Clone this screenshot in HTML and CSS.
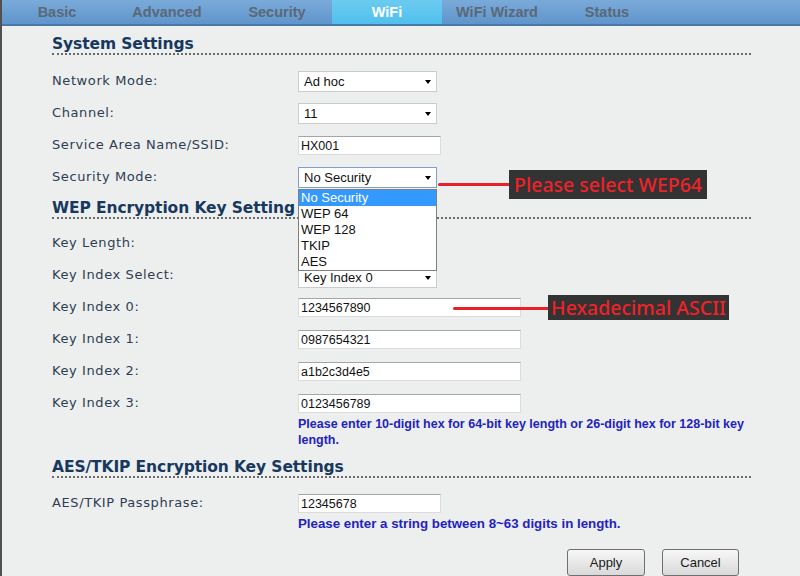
FILE: index.html
```html
<!DOCTYPE html>
<html>
<head>
<meta charset="utf-8">
<title>WiFi</title>
<link rel="stylesheet" href="styles.css">
</head>
<body>
<div class="page">
  <nav class="tabs">
    <div class="tab">Basic</div>
    <div class="tab">Advanced</div>
    <div class="tab">Security</div>
    <div class="tab active">WiFi</div>
    <div class="tab">WiFi Wizard</div>
    <div class="tab">Status</div>
  </nav>
  <main class="content">
    <h2 class="section-title first">System Settings</h2>
    <div class="rows">
      <div class="row">
        <div class="label">Network Mode:</div>
        <div class="field"><div class="select">Ad hoc<span class="arrow"></span></div></div>
      </div>
      <div class="row">
        <div class="label">Channel:</div>
        <div class="field"><div class="select">11<span class="arrow"></span></div></div>
      </div>
      <div class="row">
        <div class="label">Service Area Name/SSID:</div>
        <div class="field"><input class="text short" type="text" value="HX001"></div>
      </div>
      <div class="row">
        <div class="label">Security Mode:</div>
        <div class="field">
          <div class="anchor">
            <div class="select focus">No Security<span class="arrow"></span></div>
            <ul class="dropdown">
              <li class="sel">No Security</li>
              <li>WEP 64</li>
              <li>WEP 128</li>
              <li>TKIP</li>
              <li>AES</li>
            </ul>
            <span class="callout-line line-1"></span>
            <span class="callout box-1">Please select WEP64</span>
          </div>
        </div>
      </div>
    </div>

    <h2 class="section-title wep">WEP Encryption Key Setting</h2>
    <div class="rows wep-rows">
      <div class="row">
        <div class="label">Key Length:</div>
        <div class="field"><div class="select"><span class="arrow"></span></div></div>
      </div>
      <div class="row">
        <div class="label">Key Index Select:</div>
        <div class="field"><div class="select select-low">Key Index 0<span class="arrow"></span></div></div>
      </div>
      <div class="row">
        <div class="label">Key Index 0:</div>
        <div class="field">
          <div class="anchor">
            <input class="text long" type="text" value="1234567890">
            <span class="callout-line line-2"></span>
            <span class="callout box-2">Hexadecimal ASCII</span>
          </div>
        </div>
      </div>
      <div class="row">
        <div class="label">Key Index 1:</div>
        <div class="field"><input class="text long" type="text" value="0987654321"></div>
      </div>
      <div class="row">
        <div class="label">Key Index 2:</div>
        <div class="field"><input class="text long" type="text" value="a1b2c3d4e5"></div>
      </div>
      <div class="row hint-row">
        <div class="label">Key Index 3:</div>
        <div class="field">
          <input class="text long" type="text" value="0123456789">
          <p class="hint">Please enter 10-digit hex for 64-bit key length or 26-digit hex for 128-bit key length.</p>
        </div>
      </div>
    </div>

    <h2 class="section-title aes">AES/TKIP Encryption Key Settings</h2>
    <div class="rows aes-rows">
      <div class="row hint-row">
        <div class="label">AES/TKIP Passphrase:</div>
        <div class="field">
          <input class="text short" type="text" value="12345678">
          <p class="hint hint-lg">Please enter a string between 8~63 digits in length.</p>
        </div>
      </div>
    </div>

    <div class="actions">
      <button class="btn" type="button">Apply</button>
      <button class="btn" type="button">Cancel</button>
    </div>
  </main>
</div>
</body>
</html>
```

FILE: styles.css
```css
html, body {
  margin: 0;
  padding: 0;
  height: 576px;
  overflow: hidden;
}

body {
  background: #edeeee;
  font-family: "Liberation Sans", Arial, sans-serif;
}

.page {
  height: 576px;
  border-left: 2px solid #505050;
  box-sizing: border-box;
  background: #edeeee;
}

/* ---------- tabs ---------- */
.tabs {
  display: flex;
  height: 24px;
  background: linear-gradient(#7aaad9, #5f95cc);
  border-bottom: 2px solid #4a78a8;
}

.tab {
  width: 110px;
  line-height: 24px;
  text-align: center;
  font-weight: bold;
  font-size: 14.5px;
  color: #5b6876;
}

.tab.active {
  background: linear-gradient(#6ccbf0, #50c0ee);
  color: #ffffff;
}

/* ---------- content ---------- */
.content {
  padding: 0 49px 0 50px;
}

.section-title {
  margin: 0;
  font-family: "DejaVu Sans", Verdana, sans-serif;
  font-weight: bold;
  font-size: 15.5px;
  line-height: 18px;
  color: #17385f;
  border-bottom: 2px dotted #6a6a6a;
  letter-spacing: -0.1px;
}

.section-title.first { margin-top: 9px; }
.section-title.wep { margin-top: 6px; }
.section-title.aes { margin-top: 5px; }

.rows { margin-top: 10px; }
.wep-rows { margin-top: 8px; }
.aes-rows { margin-top: 9px; }

.row {
  display: grid;
  grid-template-columns: 246px 1fr;
  padding: 6px 0;
  height: 20px;
}

.row.hint-row {
  height: auto;
  padding-bottom: 5px;
}

.label {
  font-family: "DejaVu Sans", Verdana, sans-serif;
  font-size: 13px;
  letter-spacing: 0.6px;
  line-height: 20px;
  color: #2e3d52;
}

.field {
  position: relative;
}

.anchor {
  position: relative;
}

/* ---------- select-like boxes ---------- */
.select {
  position: relative;
  width: 139px;
  height: 21px;
  box-sizing: border-box;
  border: 1px solid #cbcbcb;
  background: #ffffff;
  font-size: 13px;
  line-height: 19px;
  padding-left: 5px;
  color: #111111;
}

.select.select-low {
  margin-top: 2px;
}

.select.focus {
  border-color: #7d9fc8;
}

.arrow {
  position: absolute;
  right: 5px;
  top: 8px;
  width: 0;
  height: 0;
  border-top: 4px solid #000000;
  border-left: 3.5px solid transparent;
  border-right: 3.5px solid transparent;
}

.dropdown {
  position: absolute;
  left: 0;
  top: 22px;
  width: 139px;
  box-sizing: border-box;
  margin: 0;
  padding: 0;
  list-style: none;
  border: 1px solid #7f7f7f;
  background: #ffffff;
  z-index: 5;
}

.dropdown li {
  height: 16px;
  line-height: 16px;
  font-size: 13px;
  padding-left: 2px;
  color: #111111;
}

.dropdown li.sel {
  background: #3399ff;
  color: #ffffff;
}

/* ---------- text inputs ---------- */
.text {
  display: block;
  margin: 1px 0 0 0;
  height: 19px;
  box-sizing: border-box;
  border: 1px solid #dcdcdc;
  border-top-color: #a5a5a5;
  background: #ffffff;
  padding: 0 2px;
  font-family: "Liberation Sans", Arial, sans-serif;
  font-size: 12.5px;
  color: #111111;
  outline: none;
}

.text.short { width: 143px; }
.text.long { width: 223px; }

.hint {
  margin: 3px 0 0 0;
  font-size: 12.5px;
  font-weight: bold;
  line-height: 16px;
  color: #2323bd;
  max-width: 455px;
}

.hint.hint-lg {
  font-size: 13.3px;
}

/* ---------- callouts ---------- */
.callout-line {
  position: absolute;
  height: 3px;
  background: #e8202a;
  border-radius: 2px;
  z-index: 6;
}

.line-1 { left: 140px; top: 16px; width: 72px; }
.line-2 { left: 155px; top: 9px; width: 96px; }

.callout {
  position: absolute;
  box-sizing: border-box;
  background: #333333;
  color: #ee2229;
  font-family: "Noto Sans", sans-serif;
  font-size: 19.5px;
  font-weight: 500;
  white-space: nowrap;
  text-align: center;
  z-index: 6;
}

.box-1 {
  left: 211px;
  top: 3px;
  width: 198px;
  height: 29px;
  line-height: 29px;
}

.box-2 {
  left: 250px;
  top: -3px;
  width: 181px;
  height: 25px;
  line-height: 25px;
}

/* ---------- buttons ---------- */
.actions {
  display: flex;
  justify-content: flex-end;
  gap: 17px;
  margin-top: 12px;
  padding-right: 12px;
}

.btn {
  height: 27px;
  padding: 0;
  border: 1px solid #707070;
  border-radius: 3px;
  background: linear-gradient(#f7f7f7, #e8e8e8 50%, #d9d9d9);
  font-family: "Liberation Sans", Arial, sans-serif;
  font-size: 13px;
  color: #1a1a1a;
}

.btn:first-child { width: 78px; }
.btn:last-child { width: 77px; }
```
